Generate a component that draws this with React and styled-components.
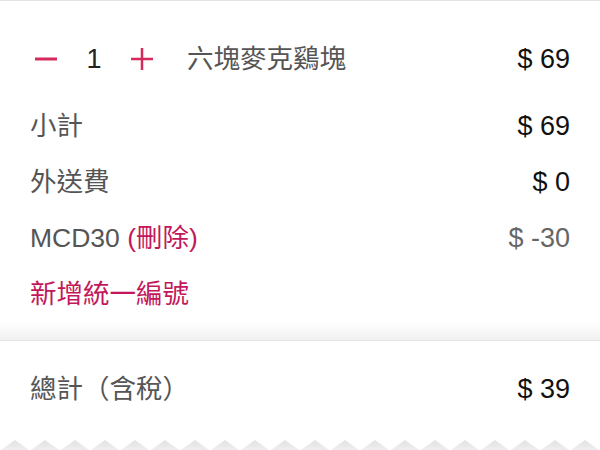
import React from "react";
import styled, { createGlobalStyle } from "styled-components";

const GlobalStyle = createGlobalStyle`
  html, body {
    margin: 0;
    padding: 0;
    background: #fff;
  }
  body {
    font-family: "Liberation Sans", "Noto Sans CJK TC", sans-serif;
  }
`;

const ACCENT = "#d42a5c";
const LINK = "#c2185b";

const Page = styled.div`
  width: 600px;
  height: 450px;
  overflow: hidden;
  background: #fff;
  border-top: 1px solid #e3e3e3;
  box-sizing: border-box;
  display: flex;
  flex-direction: column;
`;

const Section = styled.div`
  display: flex;
  flex-direction: column;
  padding: 0 30px;
`;

const ItemRow = styled.div`
  display: flex;
  align-items: center;
  height: 56px;
  margin-top: 30px;
  margin-bottom: 11px;
`;

const Stepper = styled.div`
  display: flex;
  align-items: center;
  margin-left: 4px;
  margin-right: 33px;
`;

const StepButton = styled.button`
  border: none;
  background: none;
  padding: 0;
  width: 24px;
  height: 26px;
  display: flex;
  align-items: center;
  justify-content: center;
  cursor: pointer;
`;

const Qty = styled.span`
  width: 72px;
  text-align: center;
  font-size: 27px;
  line-height: 32px;
  color: #222;
`;

const ItemName = styled.span`
  flex: 1;
  font-size: 26.5px;
  line-height: 32px;
  color: #555;
`;

const Row = styled.div`
  display: flex;
  align-items: center;
  justify-content: space-between;
  height: 56px;
  ${(p) => p.$gapTop && `margin-top: ${p.$gapTop}px;`}
`;

const Label = styled.span`
  font-size: 26.5px;
  line-height: 32px;
  color: ${(p) => (p.$link ? LINK : "#555")};
`;

const Remove = styled.span`
  color: ${LINK};
  cursor: pointer;
`;

const Value = styled.span`
  font-size: 27px;
  line-height: 32px;
  color: ${(p) => (p.$muted ? "#666" : "#111")};
`;

const Divider = styled.div`
  height: 18px;
  background: linear-gradient(#ffffff, #f1f1f1);
  border-bottom: 1px solid #e6e6e6;
`;

const Zigzag = styled.svg`
  display: block;
  margin-top: auto;
`;

const Minus = () => (
  <svg width="24" height="24" viewBox="0 0 24 24">
    <line x1="1" y1="12" x2="23" y2="12" stroke={ACCENT} strokeWidth="3" />
  </svg>
);

const Plus = () => (
  <svg width="24" height="24" viewBox="0 0 24 24">
    <line x1="1" y1="12" x2="23" y2="12" stroke={ACCENT} strokeWidth="2.5" />
    <line x1="12" y1="1" x2="12" y2="23" stroke={ACCENT} strokeWidth="2.5" />
  </svg>
);

const App = () => {
  const teeth = Array.from({ length: 21 }, (_, i) => i * 30);
  return (
    <Page>
      <GlobalStyle />
      <Section>
        <ItemRow>
          <Stepper>
            <StepButton aria-label="減少">
              <Minus />
            </StepButton>
            <Qty>1</Qty>
            <StepButton aria-label="增加">
              <Plus />
            </StepButton>
          </Stepper>
          <ItemName>六塊麥克鷄塊</ItemName>
          <Value>$ 69</Value>
        </ItemRow>
        <Row>
          <Label>小計</Label>
          <Value>$ 69</Value>
        </Row>
        <Row>
          <Label>外送費</Label>
          <Value>$ 0</Value>
        </Row>
        <Row>
          <Label>
            MCD30 <Remove>(刪除)</Remove>
          </Label>
          <Value $muted>$ -30</Value>
        </Row>
        <Row>
          <Label $link>新增統一編號</Label>
        </Row>
      </Section>
      <Divider />
      <Section>
        <Row $gapTop={20}>
          <Label>總計（含稅）</Label>
          <Value>$ 39</Value>
        </Row>
      </Section>
      <Zigzag width="600" height="10" viewBox="0 0 600 10">
        <defs>
          <linearGradient id="tooth" x1="0" y1="0" x2="0" y2="1">
            <stop offset="0" stopColor="#e2e2e2" />
            <stop offset="1" stopColor="#eeeeee" />
          </linearGradient>
        </defs>
        {teeth.map((x) => (
          <polygon
            key={x}
            points={`${x + 1},10 ${x + 15},0 ${x + 29},10`}
            fill="url(#tooth)"
          />
        ))}
      </Zigzag>
    </Page>
  );
};

export default App;
